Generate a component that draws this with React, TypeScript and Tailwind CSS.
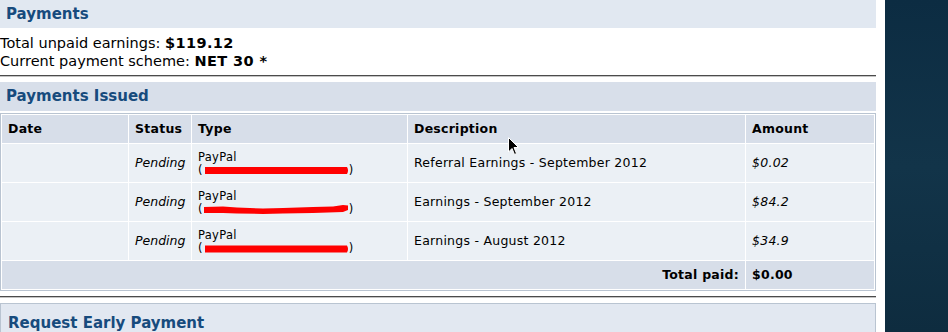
import React from "react";

const font = { fontFamily: '"DejaVu Sans", Verdana, sans-serif' };

function Redact({ kind }: { kind: number }) {
  return (
    <svg width="146" height="9" viewBox="0 0 146 9" className="inline-block align-[-1px]">
      {kind === 1 ? (
        <path d="M1 2 L20 1.5 L34 2.5 L60 3.5 L80 3 L110 2 L130 1.5 L140 0 L145 0.5 L145 5 L140 7 L110 8 L80 8.5 L60 9 L34 8.5 L20 8 L1 8 Z" fill="#ff0000" />
      ) : kind === 2 ? (
        <path d="M2 1.5 L144 1.5 Q146 5 144 8.5 L2 8.5 Z" fill="#ff0000" />
      ) : (
        <path d="M2 1 L144 1 Q146 4.5 144 8 L2 8 Z" fill="#ff0000" />
      )}
    </svg>
  );
}

export default function App() {
  const rows = [
    { desc: "Referral Earnings - September 2012", amt: "$0.02", kind: 0 },
    { desc: "Earnings - September 2012", amt: "$84.2", kind: 1 },
    { desc: "Earnings - August 2012", amt: "$34.9", kind: 2 },
  ];
  return (
    <div className="flex w-[948px] h-[332px] overflow-hidden bg-white" style={font}>
      <div className="w-[876px] shrink-0 flex flex-col relative">
        <div className="shrink-0 h-[28px] bg-[#e1e8f1] flex items-center px-[6px] text-[15px] font-semibold text-[#174b7d]">Payments</div>
        <div className="shrink-0 pt-[6px] text-[14.5px] leading-[18px] text-black">
          <div>Total unpaid earnings: <span className="font-semibold tracking-[0.4px]">$119.12</span></div>
          <div>Current payment scheme: <span className="font-semibold tracking-[0.4px]">NET 30 *</span></div>
        </div>
        <div className="shrink-0 mt-[5px] h-[2px] border-t border-t-[#4b4b4b] border-b border-b-[#c4c4c4]"></div>
        <div className="shrink-0 mt-[5px] h-[29px] bg-[#d8dfea] flex items-center px-[6px] text-[15px] font-semibold text-[#174b7d]">Payments Issued</div>
        <div className="shrink-0 mt-[2px] w-[876px] border border-[#b9c4d1] bg-white p-px grid grid-cols-[126px_62px_215px_337px_128px] gap-px text-[12.5px] tracking-[0.25px] text-black">
          <div className="h-[28px] bg-[#d7dee9] font-bold flex items-center px-[6px]">Date</div>
          <div className="h-[28px] bg-[#d7dee9] font-bold flex items-center px-[6px]">Status</div>
          <div className="h-[28px] bg-[#d7dee9] font-bold flex items-center px-[6px]">Type</div>
          <div className="h-[28px] bg-[#d7dee9] font-bold flex items-center px-[6px]">Description</div>
          <div className="h-[28px] bg-[#d7dee9] font-bold flex items-center px-[6px]">Amount</div>
          {rows.map((r, i) => (
            <React.Fragment key={i}>
              <div className="h-[38px] bg-[#ebf0f5]"></div>
              <div className="h-[38px] bg-[#ebf0f5] italic flex items-center px-[6px] tracking-normal">Pending</div>
              <div className="h-[38px] bg-[#ebf0f5] flex flex-col justify-center gap-[1px] px-[6px] text-[11.5px] leading-[12px] tracking-[0.3px]">
                <div className="h-[12px]">PayPal</div>
                <div className="h-[12px] whitespace-nowrap">(<Redact kind={r.kind} />)</div>
              </div>
              <div className="h-[38px] bg-[#ebf0f5] flex items-center px-[6px]">{r.desc}</div>
              <div className="h-[38px] bg-[#ebf0f5] italic flex items-center px-[6px]">{r.amt}</div>
            </React.Fragment>
          ))}
          <div className="col-span-4 h-[28px] bg-[#d7dee9] font-bold flex items-center justify-end px-[6px]">Total paid:</div>
          <div className="h-[28px] bg-[#d7dee9] font-bold flex items-center px-[6px]">$0.00</div>
        </div>
        <div className="shrink-0 mt-[5px] h-[2px] border-t border-t-[#4b4b4b] border-b border-b-[#c4c4c4]"></div>
        <div className="shrink-0 mt-[5px] h-[40px] border border-[#b9c4d1] bg-[#e2e8f1] px-[7px] pt-[8px] text-[15px] font-semibold text-[#174b7d] w-[876px]">Request Early Payment</div>
        <svg className="absolute left-[508px] top-[137px]" width="12" height="19" viewBox="0 0 12 19">
          <path d="M0.5 0.5 L0.5 15 L4 11.5 L6.5 17.5 L8.5 16.5 L6 10.5 L10.5 10.5 Z" fill="#000" stroke="#fff" strokeWidth="1" />
        </svg>
      </div>
      <div className="w-[9px] shrink-0 bg-white"></div>
      <div className="flex-1 bg-gradient-to-b from-[#0c2c42] via-[#123449] to-[#0e2c3f]"></div>
    </div>
  );
}
